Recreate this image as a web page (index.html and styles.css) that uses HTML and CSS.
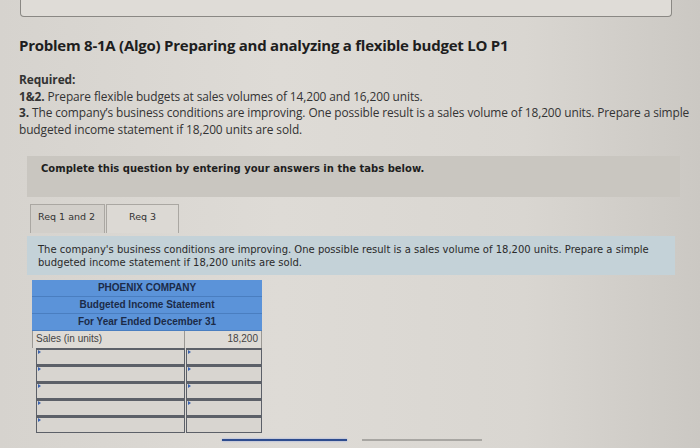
FILE: index.html
```html
<!DOCTYPE html>
<html>
<head>
<meta charset="utf-8">
<link rel="stylesheet" href="styles.css">
</head>
<body>
<div class="page">
  <div class="topbox"></div>
  <h1 class="title">Problem 8-1A (Algo) Preparing and analyzing a flexible budget LO P1</h1>
  <div class="req">
    <div class="req-head">Required:</div>
    <div><b>1&amp;2.</b> Prepare flexible budgets at sales volumes of 14,200 and 16,200 units.</div>
    <div><b>3.</b> <span>The company’s business conditions are improving. One possible result is a sales volume of 18,200 units. Prepare a simple</span></div>
    <div>budgeted income statement if 18,200 units are sold.</div>
  </div>
  <div class="complete">Complete this question by entering your answers in the tabs below.</div>
  <div class="tabs">
    <div class="tab">Req 1 and 2</div>
    <div class="tab active">Req 3</div>
  </div>
  <div class="instr">The company's business conditions are improving. One possible result is a sales volume of 18,200 units. Prepare a simple budgeted income statement if 18,200 units are sold.</div>
  <div class="sheet">
    <div class="hrow">PHOENIX COMPANY</div>
    <div class="hrow">Budgeted Income Statement</div>
    <div class="hrow">For Year Ended December 31</div>
    <div class="row">
      <div class="cell lab">Sales (in units)</div>
      <div class="cell num">18,200</div>
    </div>
    <div class="row inp"><div class="cell in"></div><div class="cell in"></div></div>
    <div class="row inp"><div class="cell in"></div><div class="cell in"></div></div>
    <div class="row inp"><div class="cell in"></div><div class="cell in"></div></div>
    <div class="row inp"><div class="cell in"></div><div class="cell in"></div></div>
    <div class="row inp"><div class="cell in"></div><div class="cell in plain"></div></div>
  </div>
  <div class="navbars">
    <div class="bar blue"></div>
    <div class="bar grey"></div>
  </div>
</div>
</body>
</html>
```
FILE: styles.css
```css
html, body {
  margin: 0;
  padding: 0;
}
body {
  width: 700px;
  height: 448px;
  overflow: hidden;
  background: linear-gradient(90deg, #d6d3ce 0%, #dedbd6 40%, #d9d6d1 75%, #cbc8c3 100%);
  font-family: "Open Sans", "Liberation Sans", sans-serif;
  color: #2a2a2a;
}
.page {
  padding: 0 0 0 19px;
}
.topbox {
  margin-left: 1px;
  width: 650px;
  height: 18px;
  margin-top: -2px;
  border: 1px solid #8a8884;
  border-top: none;
  border-radius: 0 0 4px 4px;
  background: #dfdcd7;
}
.title {
  margin: 18px 0 0 0;
  font-size: 15px;
  font-weight: 700;
  letter-spacing: -0.25px;
  color: #1e1e1e;
  line-height: 20px;
}
.req {
  margin-top: 16px;
  font-size: 11.9px;
  letter-spacing: -0.1px;
  line-height: 16.5px;
  color: #333;
  white-space: nowrap;
}
.req-head {
  font-weight: 700;
}
.req b {
  font-weight: 700;
}
.complete {
  margin: 19px 0 0 8px;
  width: 653px;
  height: 41px;
  box-sizing: border-box;
  padding: 7px 0 0 14px;
  background: #c9c6c0;
  font-family: "DejaVu Sans", Verdana, sans-serif;
  font-weight: 700;
  font-size: 10px;
  color: #1e1e1e;
}
.tabs {
  display: flex;
  margin: 7px 0 0 11px;
}
.tab {
  width: 75px;
  height: 29px;
  box-sizing: border-box;
  border: 1px solid #aaa7a2;
  border-bottom: none;
  background: #d2cfca;
  font-family: "DejaVu Sans", Verdana, sans-serif;
  font-size: 9.5px;
  color: #333;
  padding: 6px 0 0 7px;
}
.tab.active {
  width: 73px;
  background: #dcd9d4;
  padding-left: 22px;
  margin-left: 1px;
}
.instr {
  margin: 3px 0 0 8px;
  width: 648px;
  height: 39px;
  box-sizing: border-box;
  padding: 7px 20px 0 11px;
  background: #c4d2d8;
  font-family: "DejaVu Sans", Verdana, sans-serif;
  font-size: 10px;
  line-height: 13px;
  color: #2a2a2a;
}
.sheet {
  margin: 5px 0 0 13px;
  width: 230px;
  font-family: "Liberation Sans", Arial, sans-serif;
  font-size: 10px;
}
.hrow {
  height: 17px;
  box-sizing: border-box;
  background: #5b93d9;
  border-bottom: 1px solid #4a7ec0;
  text-align: center;
  font-weight: 700;
  color: #1c2b48;
  line-height: 16px;
}
.row {
  display: flex;
  height: 17px;
  box-sizing: border-box;
}
.cell {
  box-sizing: border-box;
  height: 17px;
}
.lab {
  width: 153px;
  border-left: 1px solid #9a9894;
  border-right: 1px solid #9a9894;
  padding: 2px 0 0 3px;
  color: #444;
  background: #dedbd6;
}
.num {
  width: 77px;
  border-right: 1px solid #9a9894;
  text-align: right;
  padding: 2px 3px 0 0;
  color: #444;
  background: #dedbd6;
}
.row.inp {
  padding-left: 4px;
}
.in {
  position: relative;
  border: 1px solid #5c6068;
  border-top-width: 2px;
  background: #d8d5d0;
}
.in:first-child {
  width: 149px;
}
.in:last-child {
  width: 76px;
  margin-left: 1px;
}
.in::before {
  content: "";
  position: absolute;
  left: 1px;
  top: 0;
  border-left: 3px solid #3a63b0;
  border-top: 2px solid transparent;
  border-bottom: 2px solid transparent;
}
.in.plain::before {
  display: none;
}
.navbars {
  display: flex;
  margin: 6px 0 0 203px;
  align-items: center;
}
.bar.blue {
  width: 125px;
  height: 2px;
  background: #2e4c8e;
  box-shadow: 0 0 2px #8aa0e0;
}
.bar.grey {
  width: 120px;
  height: 2px;
  background: #a8a6a2;
  margin-left: 15px;
}
```
